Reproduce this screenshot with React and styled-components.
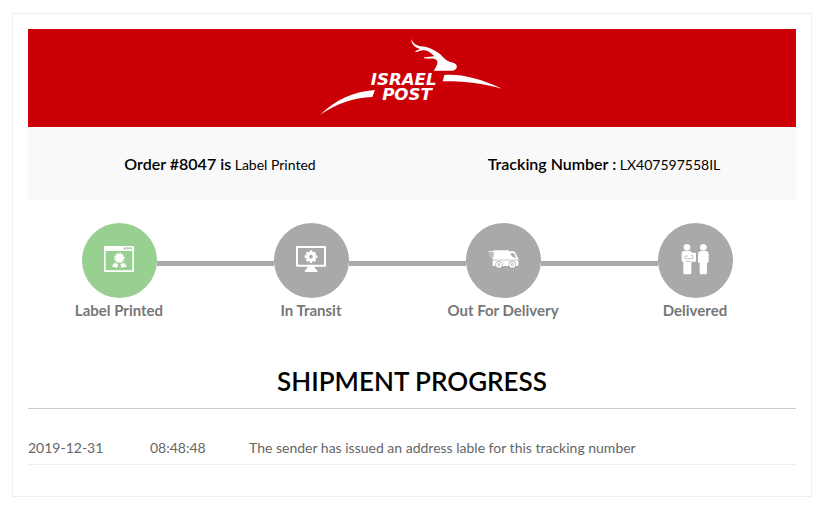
import React from "react";
import styled, { createGlobalStyle } from "styled-components";

const GlobalStyle = createGlobalStyle`
  *, *::before, *::after { box-sizing: border-box; }
  body {
    margin: 0;
    background: #fff;
    color: #000;
    font-family: Lato, "Liberation Sans", sans-serif;
  }
`;

const Card = styled.main`
  margin: 13px 15px 14px 12px;
  padding: 15px 15px 31px;
  border: 1px solid #eee;
`;

const Banner = styled.header`
  display: flex;
  justify-content: center;
  padding: 1px 0 2px;
  background: #ca0006;
`;

const LogoArt = styled.svg`
  display: block;
  width: 200px;
  height: 95px;
  fill: #fff;
`;

const LogoText = styled.text`
  font: italic 700 50px "DejaVu Sans", sans-serif;
  text-anchor: middle;
`;

const Summary = styled.section`
  display: grid;
  grid-template-columns: 1fr 1fr;
  padding: 25px 0 23px;
  background: #f9f9f9;
  text-align: center;
`;

const SummaryItem = styled.p`
  margin: 0;
  font-size: 14px;
  line-height: 25px;
`;

const SummaryLabel = styled.strong`
  font-size: 16px;
  font-weight: 600;
  line-height: 24px;
`;

const Steps = styled.ol`
  display: grid;
  grid-template-columns: repeat(4, 1fr);
  margin: 23px 5px 0 -5px;
  padding: 0;
  list-style: none;
`;

const Step = styled.li`
  display: flex;
  flex-direction: column;
  align-items: center;
`;

const Track = styled.div`
  display: grid;
  grid-template-columns: 1fr 75px 1fr;
  align-items: center;
  width: 100%;
`;

const Connector = styled.span`
  height: 5px;
  margin-top: 6px;
  background: ${(p) => (p.$visible ? "#a9a9a9" : "transparent")};
`;

const Circle = styled.span`
  width: 75px;
  height: 75px;
  border-radius: 50%;
  background: ${(p) => (p.$active ? "#98d091" : "#a9a9a9")};
  color: ${(p) => (p.$active ? "#98d091" : "#a9a9a9")};
`;

const StepArt = styled.svg`
  display: block;
  width: 75px;
  height: 75px;
  fill: #fff;
`;

const StepLabel = styled.span`
  color: #777;
  font-size: 15px;
  font-weight: 700;
  line-height: 24px;
`;

const Title = styled.h1`
  margin: 42px 0 0;
  padding-bottom: 10px;
  border-bottom: 1px solid #ccc;
  font-size: 26px;
  font-weight: 600;
  line-height: 34px;
  text-align: center;
`;

const History = styled.table`
  width: 100%;
  margin-top: 29px;
  border-collapse: collapse;
  color: #666;
  font-size: 14px;
  line-height: 20px;
`;

const Cell = styled.td`
  width: ${(p) => p.$width || "auto"};
  padding: 0 0 6px;
  border-bottom: 1px solid #eee;
  text-align: left;
`;

function Logo() {
  return (
    <LogoArt viewBox="6 0 600 285" role="img" aria-label="Israel Post">
      <path d="M304 27 C309 40 318 46 332 49 C354 50 374 60 391 73 C404 87 413 96 430 98 C439 101 442 106 440 113 Q437 121 425 122 H371 Q384 105 382 94 C379 87 372 84 360 86 L342 85 Q340 82 344 82 L373 79 C365 70 356 63 344 61 C333 59 328 64 319 66 Q313 67 317 63 L330 57 C314 52 304 43 304 27Z" />
      <path d="M403 135 C457 132 507 145 576 176 C511 160 463 153 398 154Z" />
      <path d="M30 254 C79 210 125 185 195 180 L187 201 C128 204 83 220 30 254Z" />
      <LogoText>
        <tspan x="281" y="164">ISRAEL</tspan>
        <tspan x="291" y="210">POST</tspan>
      </LogoText>
    </LogoArt>
  );
}

function CertificateIcon() {
  return (
    <StepArt viewBox="0 0 225 225" aria-hidden="true">
      <path fillRule="evenodd" d="M69 69H153Q156 69 156 72V144Q156 147 153 147H69Q66 147 66 144V72Q66 69 69 69ZM71 84V142H151V84Z" />
      <g fill="currentColor">
        <rect x="125" y="73" width="7" height="6" rx="1" />
        <rect x="134" y="73" width="7" height="6" rx="1" />
        <rect x="143" y="73" width="7" height="6" rx="1" />
      </g>
      <circle cx="112" cy="105" r="12" />
      <circle cx="112" cy="105" r="13" fill="none" stroke="#fff" strokeWidth="5" strokeDasharray="4 2.8" />
      <path d="M98 119 L109 124 L104 136 L98 131 L89 131Z M126 119 L115 124 L120 136 L126 131 L135 131Z" />
    </StepArt>
  );
}

function MonitorIcon() {
  return (
    <StepArt viewBox="0 0 225 225" aria-hidden="true">
      <path fillRule="evenodd" d="M69 69H153Q156 69 156 72V128Q156 131 153 131H69Q66 131 66 128V72Q66 69 69 69ZM72 75V125H150V75Z" />
      <path d="M101 130H121L124 137Q130 139 131 147H92Q92 139 98 137Z" />
      <circle cx="111" cy="101" r="10" fill="none" stroke="#fff" strokeWidth="9" />
      <g stroke="#fff" strokeWidth="8">
        <path d="M111 82V90M111 112V120M92 101H100M122 101H130" />
        <path d="M98 88L103 93M119 109L124 114M98 114L103 109M119 93L124 88" />
      </g>
    </StepArt>
  );
}

function VanIcon() {
  return (
    <StepArt viewBox="0 0 225 225" aria-hidden="true">
      <path d="M82 82H127Q129 82 129 85H142Q146 85 148 89L154 102Q157 104 157 108V126Q157 129 153 129H83Q80 129 80 126V103H72V101H83V97H69V95H84V91H68V89H82V86H67V84H82Z" />
      <path fill="currentColor" d="M134 91H141Q144 91 146 95L150 104H144L134 95Z" />
      <path d="M80 111H157" stroke="currentColor" strokeWidth="2" />
      {[99, 139].map((x) => (
        <g key={x}>
          <circle cx={x} cy="125" r="11" fill="currentColor" />
          <circle cx={x} cy="125" r="9" />
          <circle cx={x} cy="125" r="4" fill="currentColor" />
          <circle cx={x} cy="125" r="2" />
        </g>
      ))}
    </StepArt>
  );
}

function HandoverIcon() {
  return (
    <StepArt viewBox="0 0 225 225" aria-hidden="true">
      <circle cx="87" cy="73" r="10" />
      <path d="M78 84H96Q101 84 102 89H111Q114 89 114 92V113Q114 116 111 116H100V150Q100 154 96 154H80Q76 154 76 150V118Q71 117 71 111V92Q71 84 78 84Z" />
      <path fill="none" stroke="currentColor" strokeWidth="2" d="M80 106V102Q80 99 84 99H91M82 107H104V97H99M84 115H98" />
      <circle cx="136" cy="73" r="10" />
      <path d="M127 84H145Q152 85 152 93V115Q152 120 147 121V150Q147 154 143 154H129Q125 154 125 150V121Q120 120 120 115V93Q120 85 127 84Z" />
    </StepArt>
  );
}

const steps = [
  { label: "Label Printed", icon: CertificateIcon },
  { label: "In Transit", icon: MonitorIcon },
  { label: "Out For Delivery", icon: VanIcon },
  { label: "Delivered", icon: HandoverIcon },
];

const events = [
  {
    date: "2019-12-31",
    time: "08:48:48",
    text: "The sender has issued an address lable for this tracking number",
  },
];

export default function App() {
  return (
    <>
      <GlobalStyle />
      <Card>
        <Banner>
          <Logo />
        </Banner>
        <Summary>
          <SummaryItem>
            <SummaryLabel>Order #8047 is</SummaryLabel> Label Printed
          </SummaryItem>
          <SummaryItem>
            <SummaryLabel>Tracking Number :</SummaryLabel> LX407597558IL
          </SummaryItem>
        </Summary>
        <Steps>
          {steps.map(({ label, icon: Icon }, i) => (
            <Step key={label} aria-current={i === 0 ? "step" : undefined}>
              <Track>
                <Connector $visible={i > 0} />
                <Circle $active={i === 0}>
                  <Icon />
                </Circle>
                <Connector $visible={i < steps.length - 1} />
              </Track>
              <StepLabel>{label}</StepLabel>
            </Step>
          ))}
        </Steps>
        <Title>SHIPMENT PROGRESS</Title>
        <History aria-label="Shipment progress">
          <tbody>
            {events.map((e) => (
              <tr key={e.date + e.time}>
                <Cell $width="122px">{e.date}</Cell>
                <Cell $width="99px">{e.time}</Cell>
                <Cell>{e.text}</Cell>
              </tr>
            ))}
          </tbody>
        </History>
      </Card>
    </>
  );
}
